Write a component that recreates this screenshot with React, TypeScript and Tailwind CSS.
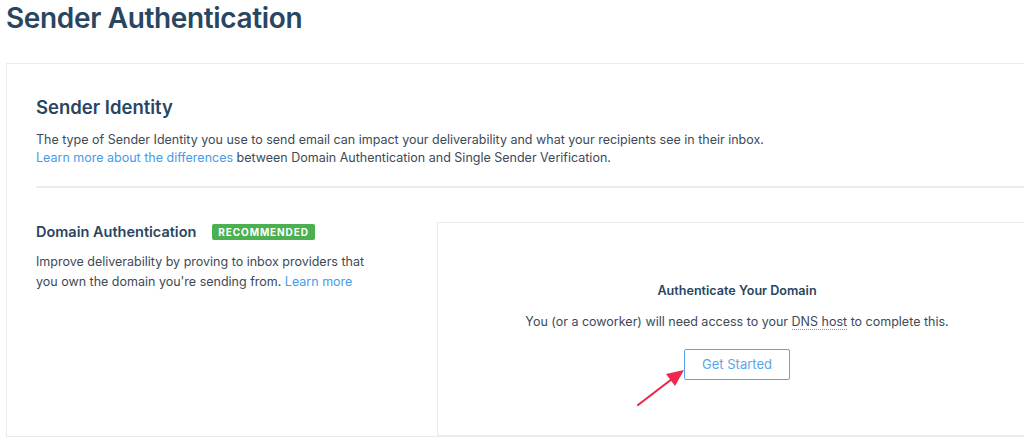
import React from "react";

export default function App() {
  return (
    <div className="relative h-[438px] w-[1024px] overflow-hidden bg-white font-['Inter',sans-serif] text-[#294661]">
      <h1 className="pl-[6px] pt-[1px] text-[28px] font-semibold leading-[34px] tracking-[-0.35px] text-[#294661]">
        Sender Authentication
      </h1>

      <div className="ml-[6px] mt-[28px] w-[1100px] border border-[#e9ecef] px-[29px] pt-[30px]">
        <h2 className="text-[18.5px] font-semibold leading-[26px]">Sender Identity</h2>
        <p className="mt-[11px] text-[12.5px] leading-[18px] text-[#3d4a57]">
          The type of Sender Identity you use to send email can impact your deliverability and what your recipients see in their inbox.
          <br />
          <a className="text-[#489be8]">Learn more about the differences</a> between Domain Authentication and Single Sender Verification.
        </p>
        <div className="mt-[19px] h-[2px] bg-[#e9edf2]" />

        <div className="mt-[34px] flex">
          <div className="w-[401px]">
            <div className="flex items-center">
              <h3 className="text-[14.5px] font-semibold leading-[20px]">Domain Authentication</h3>
              <span className="ml-[16px] rounded-[2px] bg-[#4bb04f] px-[6px] text-[10px] font-bold leading-[16px] tracking-[0.9px] text-white">
                RECOMMENDED
              </span>
            </div>
            <p className="mt-[10px] w-[345px] text-[12.5px] leading-[20px] text-[#3d4a57]">
              Improve deliverability by proving to inbox providers that you own the domain you're sending from.{" "}
              <a className="text-[#489be8]">Learn more</a>
            </p>
          </div>

          <div className="flex h-[214px] w-[600px] flex-col items-center border border-[#e9ecef] pt-[60px]">
            <h4 className="text-[12.6px] font-semibold leading-[16px]">Authenticate Your Domain</h4>
            <p className="mt-[14px] text-[12.5px] leading-[18px] text-[#3d4a57]">
              You (or a coworker) will need access to your{" "}
              <span className="border-b border-dotted border-[#8a96a3]">DNS host</span> to complete this.
            </p>
            <button className="mt-[18px] h-[31px] w-[106px] rounded-[2px] border border-[#5ba6ea] text-[13px] text-[#5ba6ea]">
              Get Started
            </button>
          </div>
        </div>
      </div>

      <svg className="absolute left-[632px] top-[362px]" width="60" height="50" viewBox="0 0 60 50">
        <line x1="6" y1="43" x2="40" y2="17" stroke="#f0264f" strokeWidth="2.2" strokeLinecap="round" />
        <polygon points="52,8 34,12 43,24" fill="#f0264f" />
      </svg>
    </div>
  );
}
